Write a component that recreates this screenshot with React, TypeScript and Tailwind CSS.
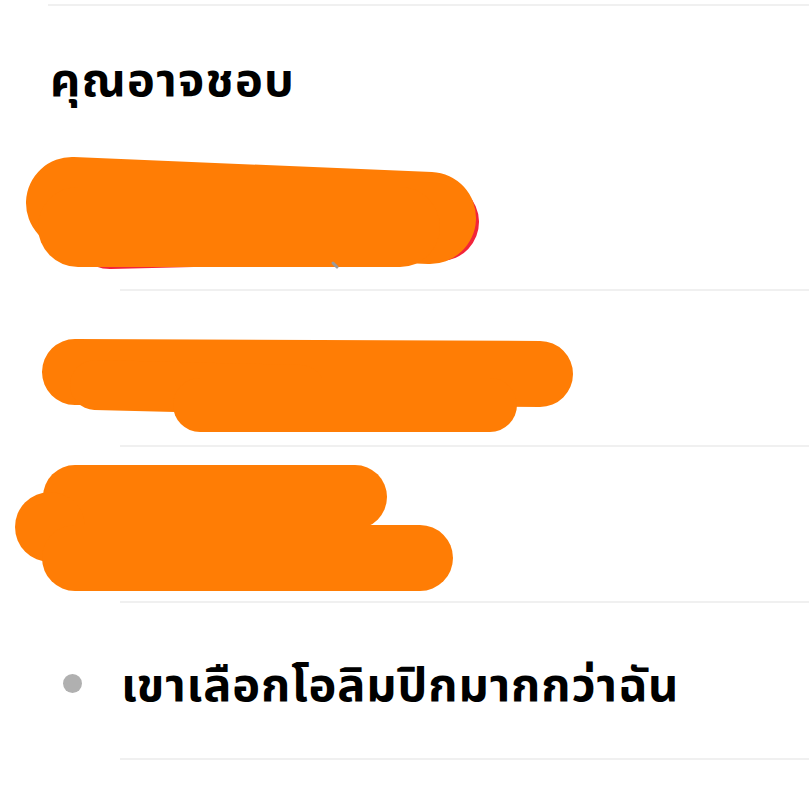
const thai = "font-['Noto_Sans','Noto_Sans_Thai','DejaVu_Sans',sans-serif]";

const Scribble = ({ children }: { children: React.ReactNode }) => (
  <svg className="absolute left-0 top-0 w-[809px] h-[156px] pointer-events-none" viewBox="0 0 809 156" fill="none" strokeLinecap="round">
    {children}
  </svg>
);

const Row = ({ children }: { children?: React.ReactNode }) => (
  <div className="relative h-[156px] flex items-center">
    <div className="w-[120px] shrink-0" />
    <div className="flex-1 h-full border-b-2 border-[#f0f0f0]" />
    {children}
  </div>
);

const App = () => {
  return (
    <div className={`w-[809px] h-[802px] bg-white overflow-hidden ${thai}`}>
      <div className="pl-[50px] pt-[4px]">
        <div className="border-t-2 border-[#f0f0f0] -ml-[2px]" />
        <h1 className="mt-[47px] h-[82px] text-[47px] leading-[50px] tracking-[1.3px] font-bold text-black">คุณอาจชอบ</h1>
      </div>

      <Row>
        <Scribble>
          <path d="M110 95 L440 87" stroke="#f2243a" strokeWidth="78" />
          <path d="M72 68 L430 83" stroke="#ff7d05" strokeWidth="92" />
          <path d="M78 92 L400 92" stroke="#ff7d05" strokeWidth="80" />
          <path d="M333 128 L337 132" stroke="#9a9a9a" strokeWidth="3" />
        </Scribble>
      </Row>

      <Row>
        <Scribble>
          <path d="M75 81 L540 83" stroke="#ff7d05" strokeWidth="66" />
          <path d="M95 94 L300 99" stroke="#ff7d05" strokeWidth="50" />
          <path d="M200 114 L490 114" stroke="#ff7d05" strokeWidth="54" />
        </Scribble>
      </Row>

      <Row>
        <Scribble>
          <path d="M75 50 L355 50" stroke="#ff7d05" strokeWidth="64" />
          <circle cx="50" cy="80" r="35" fill="#ff7d05" />
          <path d="M75 111 L420 111" stroke="#ff7d05" strokeWidth="66" />
        </Scribble>
      </Row>

      <div className="relative h-[157px] flex">
        <div className="w-[120px] shrink-0 pl-[63px] pt-[71px]">
          <div className="w-[19px] h-[19px] rounded-full bg-[#b0b0b0]" />
        </div>
        <div className="flex-1 border-b-2 border-[#f0f0f0] pt-[55px] pl-[1px]">
          <p className="text-[47px] leading-[50px] tracking-[0.9px] font-bold text-black">เขาเลือกโอลิมปิกมากกว่าฉัน</p>
        </div>
      </div>
    </div>
  );
};

export default App;
